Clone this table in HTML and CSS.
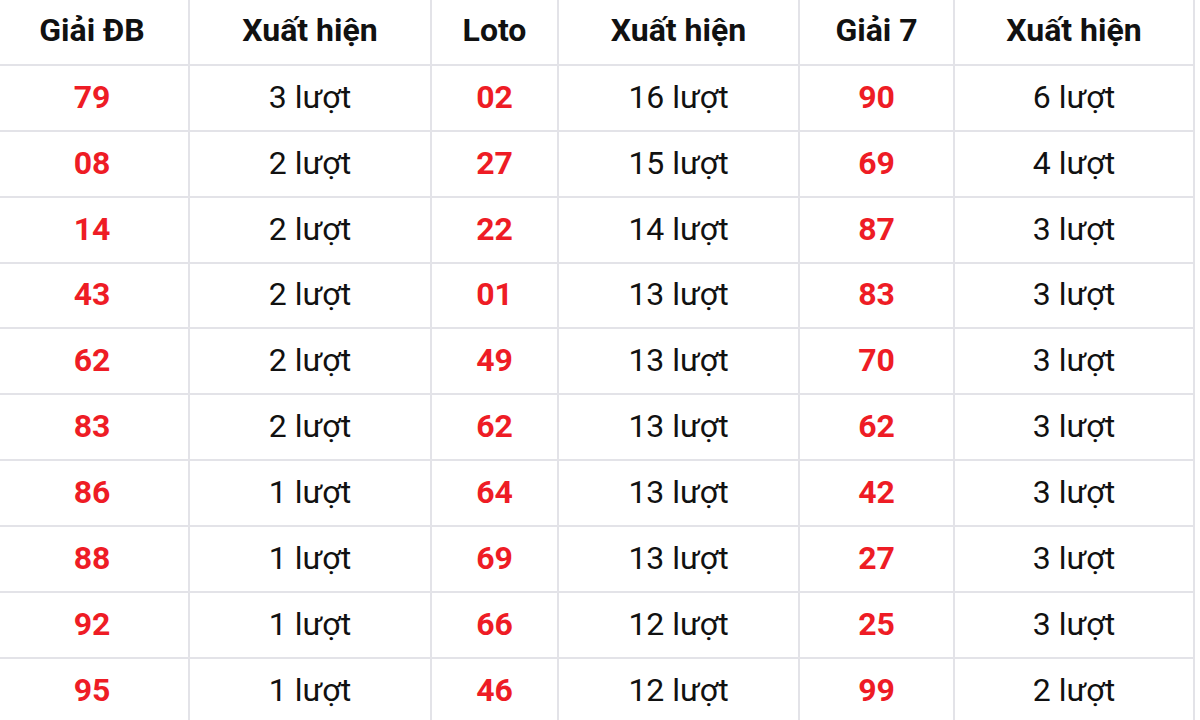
FILE: index.html
```html
<!DOCTYPE html>
<html lang="vi">
<head>
<meta charset="utf-8">
<title>Thống kê</title>
<link rel="stylesheet" href="styles.css">
</head>
<body>
<div class="grid">
  <div class="cell head">Giải ĐB</div><div class="cell head">Xuất hiện</div><div class="cell head">Loto</div><div class="cell head">Xuất hiện</div><div class="cell head">Giải 7</div><div class="cell head">Xuất hiện</div>

  <div class="cell num">79</div><div class="cell cnt">3 lượt</div><div class="cell num">02</div><div class="cell cnt">16 lượt</div><div class="cell num">90</div><div class="cell cnt">6 lượt</div>
  <div class="cell num">08</div><div class="cell cnt">2 lượt</div><div class="cell num">27</div><div class="cell cnt">15 lượt</div><div class="cell num">69</div><div class="cell cnt">4 lượt</div>
  <div class="cell num">14</div><div class="cell cnt">2 lượt</div><div class="cell num">22</div><div class="cell cnt">14 lượt</div><div class="cell num">87</div><div class="cell cnt">3 lượt</div>
  <div class="cell num">43</div><div class="cell cnt">2 lượt</div><div class="cell num">01</div><div class="cell cnt">13 lượt</div><div class="cell num">83</div><div class="cell cnt">3 lượt</div>
  <div class="cell num">62</div><div class="cell cnt">2 lượt</div><div class="cell num">49</div><div class="cell cnt">13 lượt</div><div class="cell num">70</div><div class="cell cnt">3 lượt</div>
  <div class="cell num">83</div><div class="cell cnt">2 lượt</div><div class="cell num">62</div><div class="cell cnt">13 lượt</div><div class="cell num">62</div><div class="cell cnt">3 lượt</div>
  <div class="cell num">86</div><div class="cell cnt">1 lượt</div><div class="cell num">64</div><div class="cell cnt">13 lượt</div><div class="cell num">42</div><div class="cell cnt">3 lượt</div>
  <div class="cell num">88</div><div class="cell cnt">1 lượt</div><div class="cell num">69</div><div class="cell cnt">13 lượt</div><div class="cell num">27</div><div class="cell cnt">3 lượt</div>
  <div class="cell num">92</div><div class="cell cnt">1 lượt</div><div class="cell num">66</div><div class="cell cnt">12 lượt</div><div class="cell num">25</div><div class="cell cnt">3 lượt</div>
  <div class="cell num">95</div><div class="cell cnt">1 lượt</div><div class="cell num">46</div><div class="cell cnt">12 lượt</div><div class="cell num">99</div><div class="cell cnt">2 lượt</div>
</div>
</body>
</html>
```
FILE: styles.css
```css
html, body {
  margin: 0;
  padding: 0;
  background: #ffffff;
  overflow: hidden;
}

body {
  font-family: Roboto, "Liberation Sans", sans-serif;
  color: #111111;
}

.grid {
  display: grid;
  grid-template-columns: 194px 242px 127px 241px 155px 240px;
  grid-template-rows: 66px;
  grid-auto-rows: 65.85px;
  width: 1199px;
  margin-left: -4px;
}

.cell {
  box-sizing: border-box;
  border-right: 2px solid #e3e3e8;
  border-bottom: 2px solid #e3e3e8;
  display: flex;
  align-items: center;
  justify-content: center;
  font-size: 32px;
  line-height: 1;
}

.head {
  font-weight: 700;
  color: #111111;
  padding-bottom: 4px;
}

.num {
  font-weight: 700;
  color: #ee1c25;
  padding-bottom: 2px;
}

.cnt {
  font-weight: 400;
  color: #111111;
  padding-bottom: 2px;
}
```
